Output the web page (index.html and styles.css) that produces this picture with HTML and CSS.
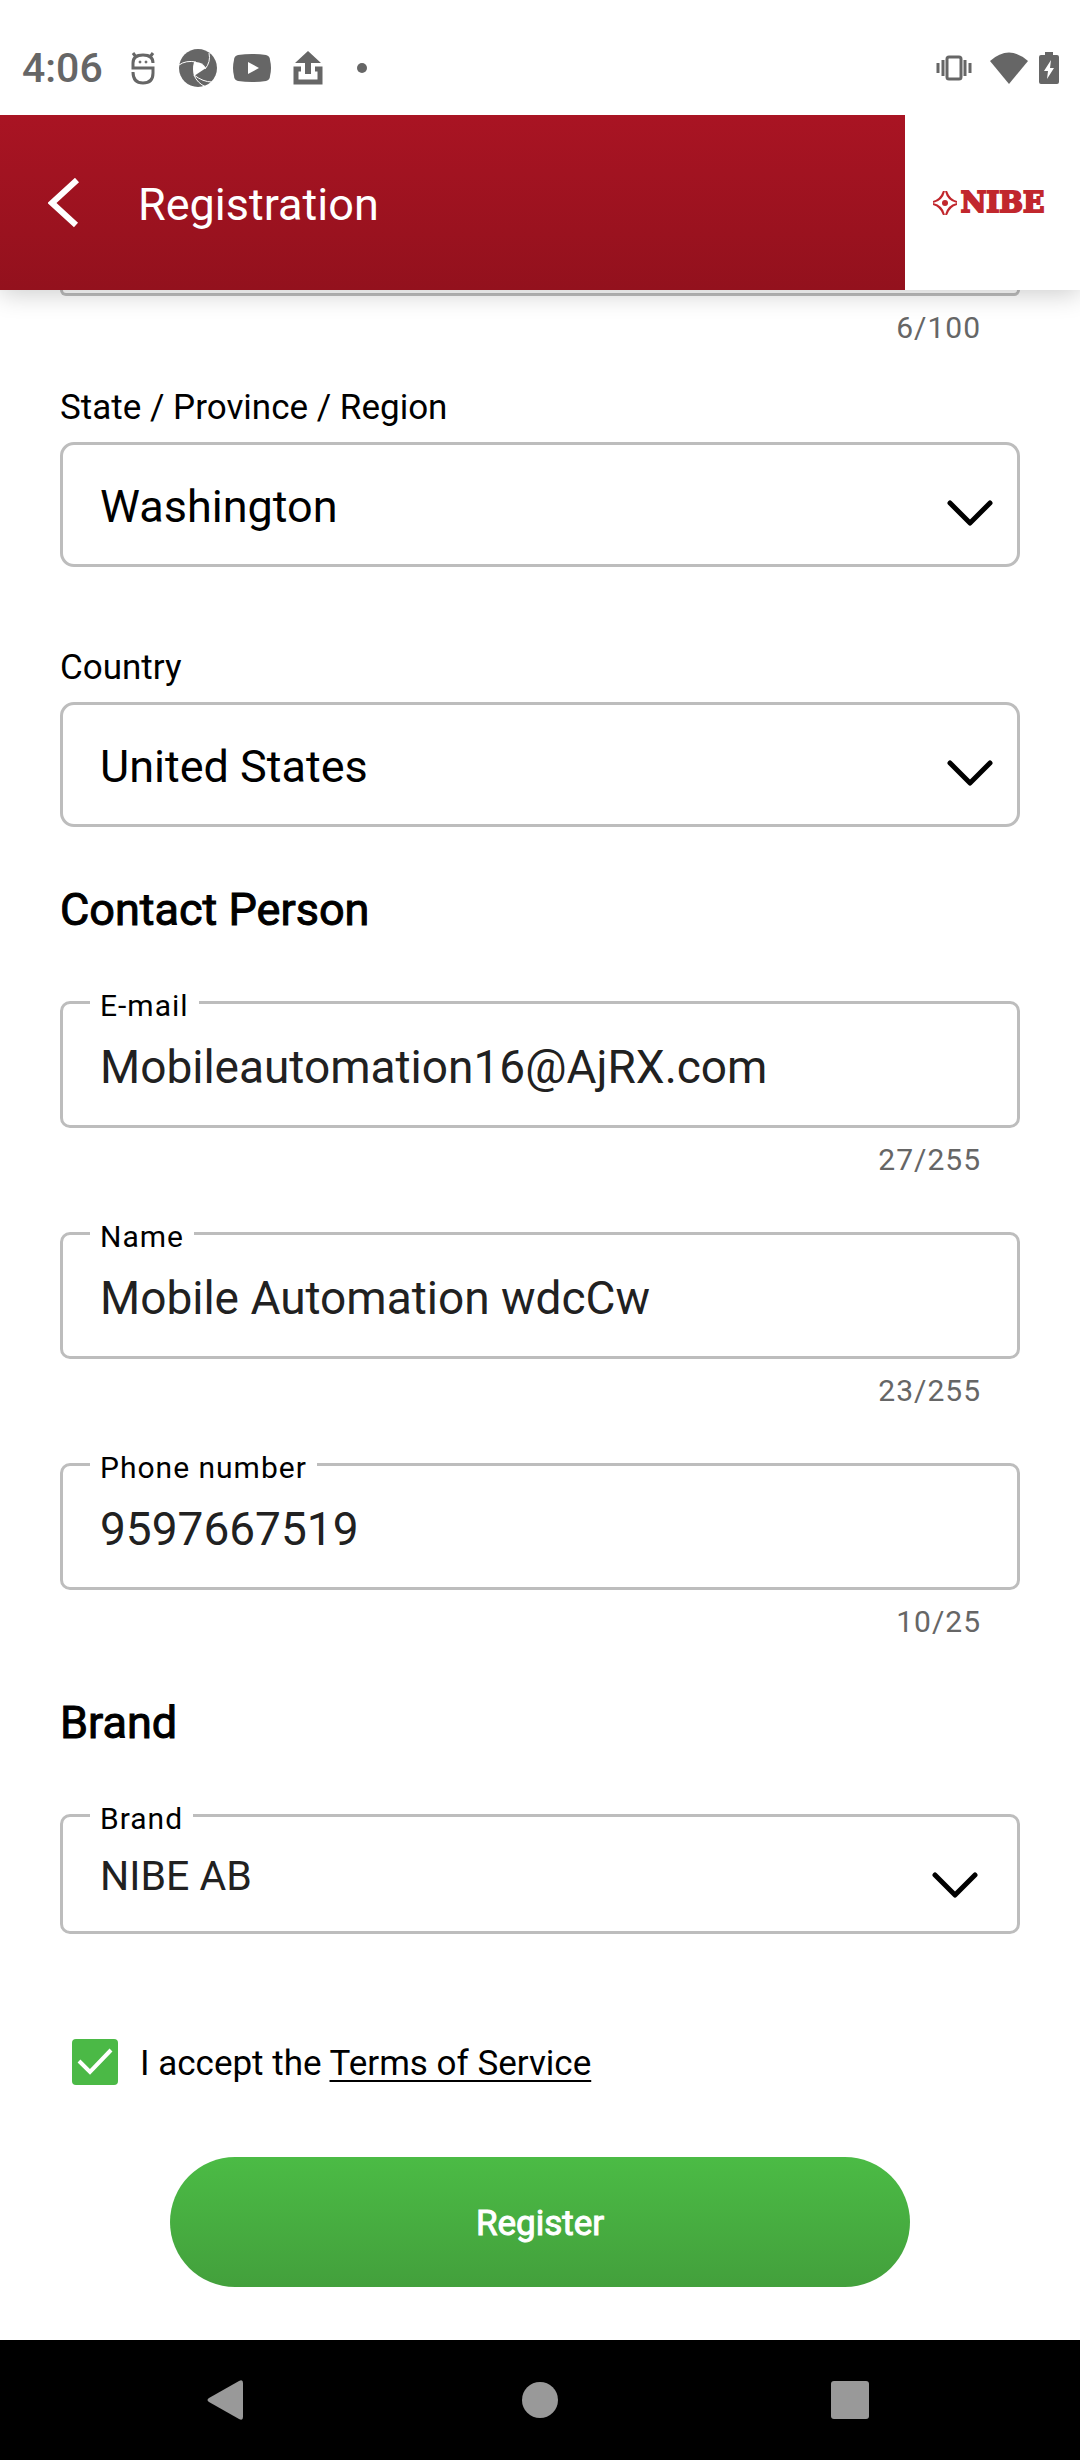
FILE: index.html
```html
<!DOCTYPE html>
<html lang="en">
<head>
<meta charset="utf-8">
<meta name="viewport" content="width=device-width, initial-scale=1">
<title>Registration</title>
<link rel="stylesheet" href="styles.css">
</head>
<body>
<div class="status-bar">
  <span class="clock">4:06</span>
  <svg class="status-debug" width="24" height="34" viewBox="0 0 24 34" fill="none" stroke="currentColor" stroke-width="3"><path d="M22 12Q22 4 12 4Q2 4 2 12V17H22V22Q22 32 12 32Q2 32 2 21M5 6L2 2M19 6L22 2"/><circle cx="9" cy="11" r="1" fill="currentColor" stroke-width="1"/><circle cx="15" cy="11" r="1" fill="currentColor" stroke-width="1"/></svg>
  <svg class="status-aperture" width="38" height="38" viewBox="0 0 38 38"><circle cx="19" cy="19" r="19" fill="currentColor"/><path d="M15 13Q23 12 27 19L15 27Q13 20 15 13Z" fill="#fff"/><path d="M0 16Q7 11 17 13M30 4Q32 13 26 20M33 33Q24 33 15 26M27 38Q18 34 15 26" stroke="#fff" stroke-width="1" fill="none"/></svg>
  <svg class="status-video" width="38" height="28" viewBox="0 0 38 28"><path d="M5 1Q19 -1 33 1Q37 2 37 6Q39 14 37 22Q37 26 33 27Q19 29 5 27Q1 26 1 22Q-1 14 1 6Q1 2 5 1Z" fill="currentColor"/><path d="M15 8L26 14L15 20Z" fill="#fff"/></svg>
  <svg class="status-upload" width="30" height="36" viewBox="0 0 30 36"><path d="M15 1L28 13H18V24H12V13H2Z" fill="currentColor"/><path d="M8 19H3V32H27V19H22" fill="none" stroke="currentColor" stroke-width="5"/></svg>
  <svg class="status-dot" width="10" height="10" viewBox="0 0 10 10"><circle cx="5" cy="5" r="5" fill="currentColor"/></svg>
  <svg class="status-vibrate" width="36" height="28" viewBox="0 0 36 28" fill="none" stroke="currentColor" stroke-width="3"><rect x="11" y="3" width="14" height="22" rx="2"/><path d="M7 6V22M29 6V22M2 9V19M34 9V19"/></svg>
  <svg class="status-wifi" width="38" height="32" viewBox="0 0 38 32"><path d="M0 9Q19 -8 38 9L19 32Z" fill="currentColor"/></svg>
  <svg class="status-battery" width="20" height="32" viewBox="0 0 20 32"><path d="M6 0H14V3H18Q20 3 20 5V30Q20 32 18 32H2Q0 32 0 30V5Q0 3 2 3H6Z" fill="currentColor"/><path d="M12 8L5 19H9L8 27L15 16H11Z" fill="#fff"/></svg>
</div>

<header class="app-bar">
  <button class="back" type="button" aria-label="Back"><svg width="32" height="50" viewBox="0 0 32 50" fill="none" stroke="#fff" stroke-width="6"><path d="M29 2L4 25L28 47"/></svg></button>
  <h1 class="title">Registration</h1>
  <div class="logo">
    <svg width="24" height="24" viewBox="0 0 24 24" fill="#c1272d"><circle cx="12" cy="12" r="3"/><path d="M11 0Q9 9 0 11Q8 9 11 0ZM13 0Q15 9 24 11Q16 9 13 0ZM11 24Q9 15 0 13Q8 15 11 24ZM13 24Q15 15 24 13Q16 15 13 24Z" stroke="#c1272d" stroke-width="2"/></svg>
    <span class="logo-name">NIBE</span>
  </div>
</header>

<main>
  <form class="form">
    <div class="scrolled-field"></div>
    <p class="counter">6/100</p>

    <div class="picker">
      <label class="picker-label" for="state">State / Province / Region</label>
      <div class="box">
        <select class="control" id="state"><option>Washington</option></select>
        <svg class="chevron" width="46" height="28" viewBox="0 0 46 28"><path d="M3 3L23 23L43 3"/></svg>
      </div>
    </div>
    <div class="picker">
      <label class="picker-label" for="country">Country</label>
      <div class="box">
        <select class="control" id="country"><option>United States</option></select>
        <svg class="chevron" width="46" height="28" viewBox="0 0 46 28"><path d="M3 3L23 23L43 3"/></svg>
      </div>
    </div>

    <h2 class="section-title">Contact Person</h2>
    <div class="fields">
      <div class="field">
        <div class="box outlined">
          <label class="notch" for="email">E-mail</label>
          <input class="control" id="email" type="email" value="Mobileautomation16@AjRX.com">
        </div>
        <p class="counter">27/255</p>
      </div>
      <div class="field">
        <div class="box outlined">
          <label class="notch" for="name">Name</label>
          <input class="control" id="name" type="text" value="Mobile Automation wdcCw">
        </div>
        <p class="counter">23/255</p>
      </div>
      <div class="field">
        <div class="box outlined">
          <label class="notch" for="phone">Phone number</label>
          <input class="control" id="phone" type="tel" value="9597667519">
        </div>
        <p class="counter">10/25</p>
      </div>
    </div>

    <h2 class="section-title">Brand</h2>
    <div class="box outlined compact">
      <label class="notch" for="brand">Brand</label>
      <select class="control" id="brand"><option>NIBE AB</option></select>
      <svg class="chevron" width="46" height="28" viewBox="0 0 46 28"><path d="M3 3L23 23L43 3"/></svg>
    </div>

    <div class="terms">
      <span class="tick">
        <input type="checkbox" id="accept" checked>
        <svg width="46" height="46" viewBox="0 0 46 46" fill="none" stroke="#fff" stroke-width="4"><path d="M7 22L18 33L39 11"/></svg>
      </span>
      <span class="terms-text"><label for="accept">I accept the </label><a href="#terms">Terms of Service</a></span>
    </div>
    <button class="register" type="submit">Register</button>
  </form>
</main>

<nav class="system-nav">
  <button type="button" aria-label="Back"><svg width="60" height="60" viewBox="0 0 60 60"><path d="M9 28L39 11Q43 9 43 13V47Q43 51 39 49L9 32Q6 30 9 28Z"/></svg></button>
  <button type="button" aria-label="Home"><svg width="60" height="60" viewBox="0 0 60 60"><circle cx="30" cy="30" r="18"/></svg></button>
  <button type="button" aria-label="Recent apps"><svg width="60" height="60" viewBox="0 0 60 60"><rect x="11" y="11" width="38" height="38" rx="3"/></svg></button>
</nav>
</body>
</html>
```
FILE: styles.css
```css
* { box-sizing: border-box; }

body {
  margin: 0;
  min-height: 100vh;
  display: flex;
  flex-direction: column;
  background: #fff;
  color: #000;
  font-family: Roboto, "Liberation Sans", sans-serif;
  font-size: 35px;
  line-height: 40px;
}

h1, h2, p { margin: 0; font-weight: 400; }
button, input, select { font: inherit; color: inherit; margin: 0; padding: 0; border: 0; background: none; }
svg { display: block; flex: none; }

.status-bar {
  position: relative;
  z-index: 2;
  height: 115px;
  padding: 20px 21px 0 22px;
  display: flex;
  align-items: center;
  background: #fff;
  color: #666;
}
.clock { font-size: 41px; font-weight: 500; margin-right: 28px; }
.status-debug { margin-right: 24px; }
.status-aperture { margin-right: 16px; }
.status-video { margin-right: 22px; }
.status-upload { margin-right: 34px; }
.status-vibrate { margin-left: auto; margin-right: 18px; }
.status-wifi { margin-right: 11px; }

.app-bar {
  position: relative;
  z-index: 1;
  height: 175px;
  display: flex;
  align-items: center;
  background: linear-gradient(#a91423, #93111d);
  box-shadow: 0 4px 24px rgba(0, 0, 0, .2);
}
.back { padding: 0 12px 0 48px; }
.title { flex: 1; padding: 4px 0 0 46px; color: #fff; font-size: 45px; line-height: 54px; }
.logo {
  width: 175px;
  align-self: stretch;
  display: flex;
  align-items: center;
  justify-content: center;
  gap: 4px;
  padding-right: 8px;
  background: #fff;
}
.logo-name {
  color: #c1272d;
  font-family: "DejaVu Serif", serif;
  font-size: 28px;
  font-weight: 700;
  -webkit-text-stroke: 2px #c1272d;
}

main { flex: 1; }
.form { padding: 0 60px 52px; display: flex; flex-direction: column; }

.scrolled-field { height: 6px; border: 3px solid #bdbdbd; border-top: 0; border-radius: 0 0 10px 10px; }
.counter {
  padding: 14px 39px 0 0;
  text-align: right;
  color: #666;
  font-size: 30px;
  line-height: 36px;
  letter-spacing: 1px;
}

.picker { display: flex; flex-direction: column; gap: 14px; }
.counter + .picker { margin-top: 42px; }
.picker + .picker { margin-top: 81px; }

.box { position: relative; height: 125px; border: 3px solid #bdbdbd; border-radius: 14px; }
.control {
  display: block;
  width: 100%;
  height: 100%;
  padding: 4px 37px 0;
  font-size: 45px;
  line-height: 56px;
  outline: 0;
  appearance: none;
}
.chevron {
  position: absolute;
  right: 24px;
  top: 55px;
  pointer-events: none;
  fill: none;
  stroke: #000;
  stroke-width: 5;
  stroke-linecap: round;
  stroke-linejoin: round;
}

.section-title { margin: 56px 0 64px; font-size: 45px; line-height: 54px; -webkit-text-stroke: 1px #000; }

.fields { display: flex; flex-direction: column; gap: 54px; }
.outlined { height: 127px; border-radius: 10px; }
.outlined .control { color: #212121; font-size: 46px; }
.notch {
  position: absolute;
  left: 27px;
  top: -16px;
  padding: 0 10px;
  background: #fff;
  font-size: 30px;
  line-height: 36px;
  letter-spacing: 1px;
}
.compact { height: 120px; }
.compact .control { font-size: 41px; }
.compact .chevron { right: 39px; }

.terms { margin-top: 105px; padding-left: 12px; display: flex; align-items: center; gap: 22px; }
.terms-text { padding-top: 4px; }
.terms a { color: inherit; text-decoration-thickness: 2px; text-underline-offset: 5px; }
.tick { position: relative; display: flex; }
.tick input { width: 46px; height: 46px; border-radius: 4px; background: #4bb946; appearance: none; }
.tick svg { position: absolute; inset: 0; pointer-events: none; }

.register {
  margin: 72px 110px 0;
  padding-top: 4px;
  height: 130px;
  border-radius: 65px;
  background: linear-gradient(#4bbb45, #43a03c);
  color: #fff;
  -webkit-text-stroke: 1px #fff;
}

.system-nav { height: 120px; display: flex; align-items: center; justify-content: center; gap: 250px; background: #000; }
.system-nav svg { fill: #999; }
```
